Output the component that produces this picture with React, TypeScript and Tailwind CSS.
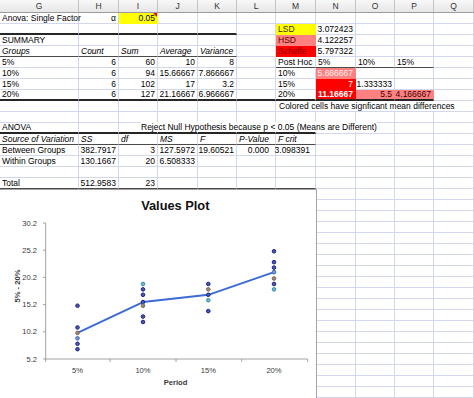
import React from 'react';

const W = ['w-[79px]', 'w-[40px]', 'w-[39px]', 'w-[40px]', 'w-[39px]', 'w-[39px]', 'w-[40px]', 'w-[40px]', 'w-[39px]', 'w-[39px]', 'w-[40px]'];
const LETTERS = ['G', 'H', 'I', 'J', 'K', 'L', 'M', 'N', 'O', 'P', 'Q'];

type Cell = {
  c: number;
  t: string;
  r?: boolean;
  i?: boolean;
  b?: boolean;
  bg?: string;
  fg?: string;
  ov?: string;
  tri?: boolean;
  pr?: string;
};
type Line = { from: number; to: number; cls: string };
type Row = { cells: Cell[]; lines?: Line[] };

const THICK = 'border-b-2 border-b-[#262626]';
const THIN = 'border-b border-b-[#4a4a4a]';
const YEL = 'bg-[#ffff00]';
const SAL = 'bg-[#ff8080]';
const RED = 'bg-[#ff0000]';

const rows: Row[] = [
  { cells: [{ c: 0, t: 'Anova: Single Factor' }, { c: 1, t: 'α', r: true }, { c: 2, t: '0.05', r: true, bg: YEL, tri: true }] },
  { cells: [{ c: 6, t: 'LSD', bg: YEL, fg: 'text-[#3a2a00]' }, { c: 7, t: '3.072423', r: true }], lines: [{ from: 0, to: 4, cls: THICK }] },
  { cells: [{ c: 0, t: 'SUMMARY' }, { c: 6, t: 'HSD', bg: SAL, fg: 'text-[#5a0000]' }, { c: 7, t: '4.122257', r: true }] },
  {
    cells: [
      { c: 0, t: 'Groups', i: true },
      { c: 1, t: 'Count', i: true },
      { c: 2, t: 'Sum', i: true },
      { c: 3, t: 'Average', i: true },
      { c: 4, t: 'Variance', i: true },
      { c: 6, t: 'Scheffe', bg: RED, fg: 'text-[#8a0000]' },
      { c: 7, t: '5.797322', r: true },
    ],
    lines: [{ from: 0, to: 4, cls: THIN }],
  },
  {
    cells: [
      { c: 0, t: '5%' },
      { c: 1, t: '6', r: true },
      { c: 2, t: '60', r: true },
      { c: 3, t: '10', r: true },
      { c: 4, t: '8', r: true },
      { c: 6, t: 'Post Hoc' },
      { c: 7, t: '5%' },
      { c: 8, t: '10%' },
      { c: 9, t: '15%' },
    ],
    lines: [{ from: 6, to: 9, cls: THIN }],
  },
  {
    cells: [
      { c: 0, t: '10%' },
      { c: 1, t: '6', r: true },
      { c: 2, t: '94', r: true },
      { c: 3, t: '15.66667', r: true },
      { c: 4, t: '7.866667', r: true },
      { c: 6, t: '10%' },
      { c: 7, t: '5.666667', r: true, bg: SAL, fg: 'text-[#fff0f0]' },
    ],
  },
  {
    cells: [
      { c: 0, t: '15%' },
      { c: 1, t: '6', r: true },
      { c: 2, t: '102', r: true },
      { c: 3, t: '17', r: true },
      { c: 4, t: '3.2', r: true },
      { c: 6, t: '15%' },
      { c: 7, t: '7', r: true, bg: RED, fg: 'text-white' },
      { c: 8, t: '1.333333', r: true },
    ],
  },
  {
    cells: [
      { c: 0, t: '20%' },
      { c: 1, t: '6', r: true },
      { c: 2, t: '127', r: true },
      { c: 3, t: '21.16667', r: true },
      { c: 4, t: '6.966667', r: true },
      { c: 6, t: '20%' },
      { c: 7, t: '11.16667', r: true, bg: RED, fg: 'text-white', b: true },
      { c: 8, t: '5.5', r: true, bg: SAL, fg: 'text-[#3a0000]' },
      { c: 9, t: '4.166667', r: true, bg: SAL, fg: 'text-[#3a0000]' },
    ],
    lines: [{ from: 0, to: 9, cls: THICK }],
  },
  { cells: [{ c: 6, t: 'Colored cells have signficant mean differences', ov: 'ml-[1px]' }] },
  { cells: [] },
  {
    cells: [
      { c: 0, t: 'ANOVA' },
      { c: 2, t: 'Reject Null Hypothesis because p < 0.05 (Means are Different)', ov: 'ml-[20px]' },
    ],
    lines: [{ from: 0, to: 6, cls: THICK }],
  },
  {
    cells: [
      { c: 0, t: 'Source of Variation', i: true },
      { c: 1, t: 'SS', i: true },
      { c: 2, t: 'df', i: true },
      { c: 3, t: 'MS', i: true },
      { c: 4, t: 'F', i: true },
      { c: 5, t: 'P-Value', i: true },
      { c: 6, t: 'F crit', i: true },
    ],
    lines: [{ from: 0, to: 6, cls: THIN }],
  },
  {
    cells: [
      { c: 0, t: 'Between Groups' },
      { c: 1, t: '382.7917', r: true },
      { c: 2, t: '3', r: true },
      { c: 3, t: '127.5972', r: true },
      { c: 4, t: '19.60521', r: true },
      { c: 5, t: '0.000', r: true, pr: 'pr-[6px]' },
      { c: 6, t: '3.098391', r: true, pr: 'pr-[5px]' },
    ],
  },
  {
    cells: [
      { c: 0, t: 'Within Groups' },
      { c: 1, t: '130.1667', r: true },
      { c: 2, t: '20', r: true },
      { c: 3, t: '6.508333', r: true },
    ],
  },
  { cells: [] },
  {
    cells: [
      { c: 0, t: 'Total' },
      { c: 1, t: '512.9583', r: true },
      { c: 2, t: '23', r: true },
    ],
    lines: [{ from: 0, to: 6, cls: THIN }],
  },
];

while (rows.length < 35) rows.push({ cells: [] });

function SheetRow({ row }: { row: Row }) {
  return (
    <div className="flex h-[11px]">
      {W.map((w, c) => {
        const cell = row.cells.find((x) => x.c === c);
        const line = row.lines?.find((l) => c >= l.from && c <= l.to);
        const bb = line ? line.cls : cell?.bg ? 'border-b border-b-transparent' : 'border-b border-b-[#d3d7ec]';
        const br = cell?.bg ? 'border-r border-r-transparent' : 'border-r border-r-[#d3d7ec]';
        const align = cell?.r ? `justify-end ${cell.pr ?? 'pr-[2px]'}` : 'justify-start pl-[2px]';
        return (
          <div key={c} className={`relative shrink-0 ${w} ${bb} ${br} ${cell?.bg ?? ''} flex items-end ${align}`}>
            {cell &&
              (cell.ov ? (
                <span className={`relative z-10 whitespace-nowrap bg-white leading-[10px] ${cell.ov}`}>{cell.t}</span>
              ) : (
                <span
                  className={`whitespace-nowrap leading-[10px] ${cell.i ? 'italic' : ''} ${cell.b ? 'font-bold' : ''} ${cell.fg ?? ''}`}
                >
                  {cell.t}
                </span>
              ))}
            {cell?.tri && (
              <span className="absolute top-0 right-0 w-0 h-0 border-t-[4px] border-t-[#e00000] border-l-[4px] border-l-transparent" />
            )}
          </div>
        );
      })}
    </div>
  );
}

const yv = (v: number) => 359 - (v - 5.2) * 5.44;

const NAVY = 'navy';
const TEAL = 'teal';
const BROWN = 'brown';
const LB = 'lb';

const dots: [number, number, string][] = [
  [77.5, 15, NAVY], [77.5, 11, NAVY], [77.5, 10, BROWN], [77.5, 9, LB], [77.5, 8, NAVY], [77.5, 7, NAVY],
  [143, 19, TEAL], [143, 18, NAVY], [143, 17, NAVY], [143, 15.667, NAVY], [143, 15, BROWN], [143, 13, NAVY], [143, 12, NAVY],
  [208.3, 19, NAVY], [208.3, 18, BROWN], [208.3, 17, NAVY], [208.3, 16, TEAL], [208.3, 14, NAVY],
  [274, 25, NAVY], [274, 23, NAVY], [274, 22, NAVY], [274, 21.167, LB], [274, 20, BROWN], [274, 19, NAVY], [274, 18, TEAL],
];

const dotStyle: Record<string, { fill: string; stroke: string }> = {
  navy: { fill: '#4a57b4', stroke: '#1c2380' },
  teal: { fill: '#6fb8d2', stroke: '#3a8cad' },
  brown: { fill: '#a08c76', stroke: '#786652' },
  lb: { fill: '#7a9cd8', stroke: '#3a66b3' },
};

function Chart() {
  const yTicks = [30.2, 25.2, 20.2, 15.2, 10.2, 5.2];
  const xTicks = [45.7, 110, 176, 241.7, 307.7];
  const cats: [number, string][] = [[77.5, '5%'], [143, '10%'], [208.3, '15%'], [274, '20%']];
  const means: [number, number][] = [[77.5, 10], [143, 15.6667], [208.3, 17], [274, 21.1667]];
  return (
    <div className="absolute left-[-1px] top-[189px] w-[318px] h-[220px] bg-white border border-[#a3a3a3]">
      <svg width={316} height={218} viewBox="0 190 316 218" className="block">
        <text x={175.3} y={209.5} textAnchor="middle" fontSize={12.8} fontWeight={700} fill="#111" fontFamily="'Liberation Sans', Arial, sans-serif">
          Values Plot
        </text>
        <line x1={45.7} y1={223} x2={45.7} y2={359} stroke="#8a8a8a" strokeWidth={0.8} />
        {yTicks.map((v) => (
          <g key={v}>
            <line x1={43} y1={yv(v)} x2={45.7} y2={yv(v)} stroke="#8a8a8a" strokeWidth={0.8} />
            <text x={37} y={yv(v) + 2.6} textAnchor="end" fontSize={7.6} fill="#3a3a3a" fontFamily="'Liberation Sans', Arial, sans-serif">
              {v.toFixed(1)}
            </text>
          </g>
        ))}
        <line x1={45.7} y1={359} x2={307.7} y2={359} stroke="#8a8a8a" strokeWidth={0.8} />
        {xTicks.map((x) => (
          <line key={x} x1={x} y1={359} x2={x} y2={362} stroke="#8a8a8a" strokeWidth={0.8} />
        ))}
        {cats.map(([x, t]) => (
          <text key={t} x={x} y={372.8} textAnchor="middle" fontSize={7.6} fill="#3a3a3a" fontFamily="'Liberation Sans', Arial, sans-serif">
            {t}
          </text>
        ))}
        <text x={175.5} y={385.2} textAnchor="middle" fontSize={7.6} fontWeight={700} fill="#3a3a3a" fontFamily="'Liberation Sans', Arial, sans-serif">
          Period
        </text>
        <text
          x={0}
          y={0}
          transform="translate(19.5 286) rotate(-90)"
          textAnchor="middle"
          fontSize={7.6}
          fontWeight={700}
          fill="#3a3a3a"
          fontFamily="'Liberation Sans', Arial, sans-serif"
        >
          5% - 20%
        </text>
        <polyline
          points={means.map(([x, v]) => `${x},${yv(v)}`).join(' ')}
          fill="none"
          stroke="#3a6bd4"
          strokeWidth={1.9}
          strokeLinejoin="round"
        />
        {dots.map(([x, v, k], i) => (
          <circle key={i} cx={x} cy={yv(v)} r={1.8} fill={dotStyle[k].fill} stroke={dotStyle[k].stroke} strokeWidth={1} />
        ))}
      </svg>
    </div>
  );
}

export default function App() {
  return (
    <div className="relative w-[474px] h-[398px] overflow-hidden bg-white text-[8.5px] text-black font-['Liberation_Sans',Arial,sans-serif]">
      <div className="flex h-[13px] bg-linear-to-b from-[#f8f8f8] to-[#e6e6e6] border-b border-b-[#9c9c9c]">
        {W.map((w, c) => (
          <div key={c} className={`shrink-0 ${w} border-r border-r-[#c4c4c4] flex items-center justify-center text-[#333] leading-[12px]`}>
            {LETTERS[c]}
          </div>
        ))}
      </div>
      {rows.map((row, i) => (
        <SheetRow key={i} row={row} />
      ))}
      <Chart />
    </div>
  );
}
